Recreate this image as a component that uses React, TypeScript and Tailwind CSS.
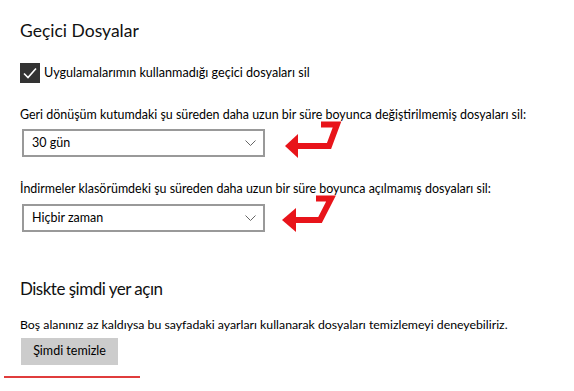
import React from "react";

function Chevron() {
  return (
    <svg width="11" height="6" viewBox="0 0 11 6" className="block">
      <path d="M0.5 0.5 L5.5 5.5 L10.5 0.5" fill="none" stroke="#666" strokeWidth="1" />
    </svg>
  );
}

function Select({ value }: { value: string }) {
  return (
    <div className="flex h-[28px] w-[243px] items-center justify-between border-2 border-[#999999] pl-[8px] pr-[7px] text-[12.5px] text-black">
      <span>{value}</span>
      <Chevron />
    </div>
  );
}

export default function App() {
  return (
    <div
      className="relative h-[391px] w-[574px] overflow-hidden bg-white text-black"
      style={{ fontFamily: 'Lato, "Noto Sans", sans-serif' }}
    >
      <div className="flex flex-col pl-[20px] pt-[18px]">
        <h1 className="whitespace-nowrap text-[17.5px] leading-[26px] font-normal text-[#111]">Geçici Dosyalar</h1>
        <label className="mt-[19px] flex h-[20px] items-center gap-[4px] whitespace-nowrap text-[12.6px] leading-[20px]">
          <span className="flex h-[20px] w-[20px] items-center justify-center bg-[#333333]">
            <svg width="14" height="12" viewBox="0 0 14 12">
              <path d="M1 6.5 L5 10.5 L13 1.5" fill="none" stroke="#fff" strokeWidth="1.6" />
            </svg>
          </span>
          <span>Uygulamalarımın kullanmadığı geçici dosyaları sil</span>
        </label>
        <p className="mt-[22px] whitespace-nowrap text-[12.45px] leading-[20px]">
          Geri dönüşüm kutumdaki şu süreden daha uzun bir süre boyunca değiştirilmemiş dosyaları sil:
        </p>
        <div className="mt-[4px] pl-[2px]">
          <Select value="30 gün" />
        </div>
        <p className="mt-[22px] whitespace-nowrap text-[12.45px] leading-[20px]">
          İndirmeler klasörümdeki şu süreden daha uzun bir süre boyunca açılmamış dosyaları sil:
        </p>
        <div className="mt-[5px] pl-[2px]">
          <Select value="Hiçbir zaman" />
        </div>
        <h2 className="mt-[44px] whitespace-nowrap text-[17px] leading-[26px] tracking-[-0.5px] font-normal text-[#111]">Diskte şimdi yer açın</h2>
        <p className="mt-[13px] whitespace-nowrap text-[12.3px] leading-[20px]">
          Boş alanınız az kaldıysa bu sayfadaki ayarları kullanarak dosyaları temizlemeyi deneyebiliriz.
        </p>
        <div className="mt-[3px] pl-[1px]">
          <button className="flex h-[27px] w-[97px] items-center justify-center bg-[#cccccc] text-[12.5px] font-normal text-black">
            Şimdi temizle
          </button>
        </div>
      </div>
      <div className="absolute left-[4px] top-[376px] h-[2px] w-[136px] bg-[#e03c3c]" />
      <svg className="absolute left-0 top-0" width="574" height="391" viewBox="0 0 574 391">
        <polygon points="285,146 298,134 298,158" fill="#e8141a" />
        <polyline points="296,146 329,146 337,124.5 321,124.5" fill="none" stroke="#e8141a" strokeWidth="6" strokeLinejoin="miter" />
        <polygon points="282,220 296,208 296,232" fill="#e8141a" />
        <polyline points="294,220 320,220 331,198.5 316,198.5" fill="none" stroke="#e8141a" strokeWidth="6" strokeLinejoin="miter" />
      </svg>
    </div>
  );
}
